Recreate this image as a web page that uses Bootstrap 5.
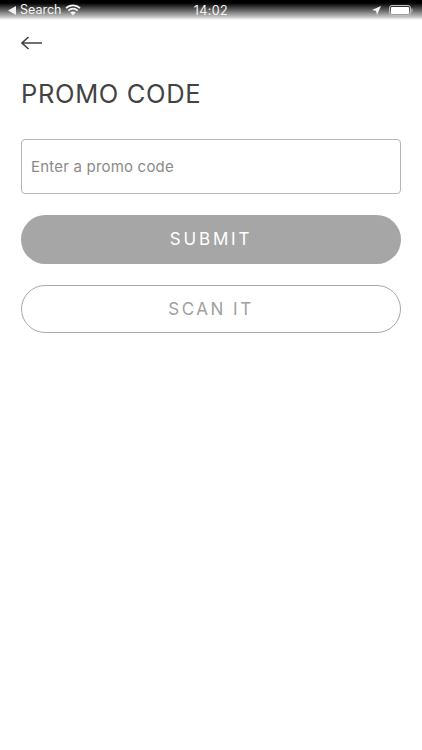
<!DOCTYPE html>
<html lang="en">
<head>
<meta charset="utf-8">
<title>Promo code</title>
<link rel="stylesheet" href="https://cdn.jsdelivr.net/npm/bootstrap@5.3.0/dist/css/bootstrap.min.css">
<style>
html,body{height:100%;}
body{font-family:"Inter","Liberation Sans",sans-serif;background:#fff;color:#434343;overflow:hidden;}
.status-strip{height:20px;padding:0 9px 0 8px;background:linear-gradient(to bottom,#000 0,#000 3px,#6e6e6e 11px,#c4c4c4 17px,#fff 20px);color:#f4f4f4;font-size:12.5px;line-height:1;position:relative;}
.status-clock{position:absolute;left:0;right:0;top:5px;text-align:center;font-size:12.5px;letter-spacing:.4px;}
.back-row{height:46px;padding:0 21px;}
.page-head{font-size:25.5px;font-weight:400;letter-spacing:.65px;line-height:30px;margin:13px 0 30px;color:#434343;}
.promo-field.form-control{height:55px;border:1px solid #b5b5b5;border-radius:4px;padding:0 9px;font-size:15px;letter-spacing:.2px;color:#434343;box-shadow:none;}
.promo-field.form-control::placeholder{color:#8a8a8a;opacity:1;}
.pill-btn.btn{border-radius:25px;font-size:17px;display:flex;align-items:center;justify-content:center;padding:1px 0 0;}
.pill-solid.btn{height:49px;background:#a6a6a6;border:0;color:#fff;margin-top:21px;letter-spacing:2.8px;}
.pill-line.btn{height:48px;background:#fff;border:1px solid #a9a9a9;color:#a0a0a0;margin-top:21px;letter-spacing:2.5px;}
.content-pad{padding:0 21px;}
</style>
</head>
<body>
<div class="status-strip d-flex align-items-center justify-content-between">
  <div class="d-flex align-items-center gap-1">
    <svg width="8" height="9" viewBox="0 0 8 9"><path d="M8 0V9L0 4.5Z" fill="#f0f0f0"/></svg>
    <span>Search</span>
    <svg width="16" height="12" viewBox="0 0 16 12"><path d="M1 4.2A10 10 0 0 1 15 4.2M3.3 6.6A6.8 6.8 0 0 1 12.7 6.6" fill="none" stroke="#f4f4f4" stroke-width="1.7"/><path d="M5.2 8.6A3.9 3.9 0 0 1 10.8 8.6L8 11.5Z" fill="#f4f4f4"/></svg>
  </div>
  <div class="status-clock">14:02</div>
  <div class="d-flex align-items-center gap-2">
    <svg width="9" height="9" viewBox="0 0 9 9"><path d="M9 0L5 9 4 5 0 4Z" fill="#f4f4f4"/></svg>
    <svg width="24" height="11" viewBox="0 0 24 11"><rect x=".5" y=".5" width="21" height="10" rx="2.5" fill="none" stroke="#bdbdbd"/><rect x="2" y="2" width="18" height="7" rx="1" fill="#fff"/><rect x="22.5" y="3.5" width="1" height="4" fill="#bdbdbd"/></svg>
  </div>
</div>
<div class="back-row d-flex align-items-center">
  <svg width="21" height="14" viewBox="0 0 21 14"><path d="M21 7H1M7.5 1L1 7l6.5 6" fill="none" stroke="#434343" stroke-width="1.6"/></svg>
</div>
<div class="content-pad">
  <h1 class="page-head">PROMO CODE</h1>
  <input class="form-control promo-field" type="text" placeholder="Enter a promo code">
  <button class="btn pill-btn pill-solid w-100" type="button">SUBMIT</button>
  <button class="btn pill-btn pill-line w-100" type="button">SCAN IT</button>
</div>
<script src="https://cdn.jsdelivr.net/npm/bootstrap@5.3.0/dist/js/bootstrap.bundle.min.js"></script>
</body>
</html>
